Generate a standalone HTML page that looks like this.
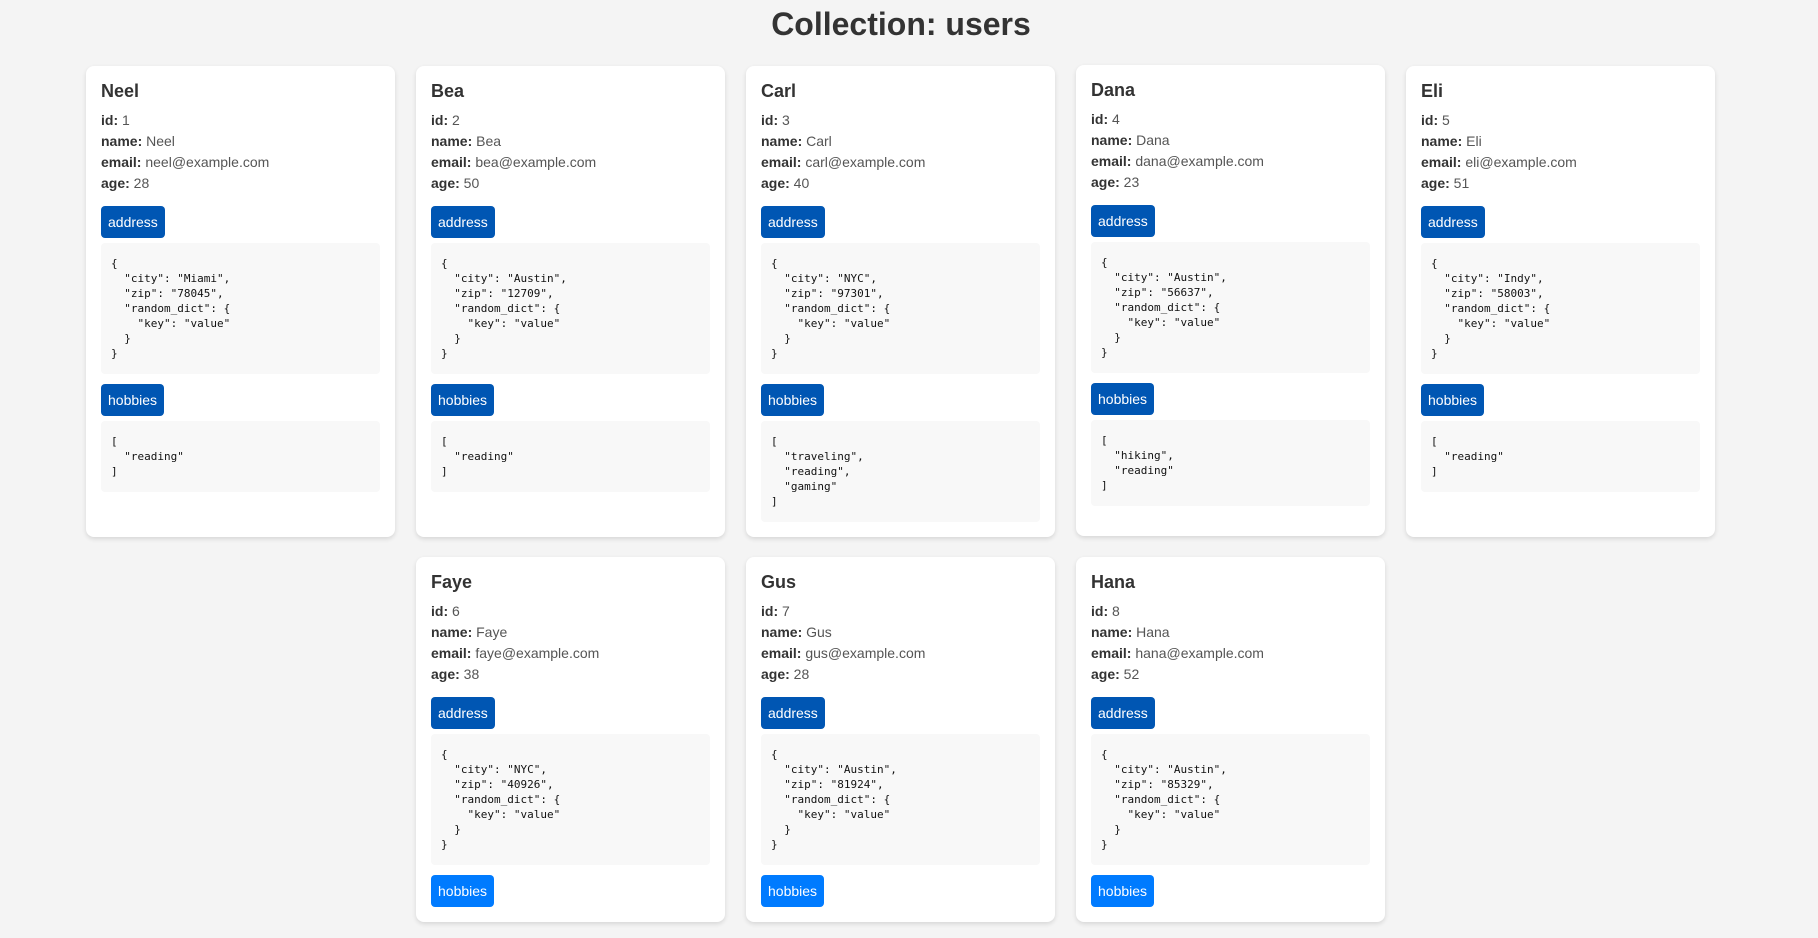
<!DOCTYPE html>
<html><head><meta charset="utf-8"><style>
body{margin:0;background:#f4f4f4;font-family:"Liberation Sans",Arial,sans-serif;width:1818px;height:938px;overflow:hidden}
h1{margin:0;padding-top:6px;height:60px;text-align:center;font-size:32px;line-height:37px;color:#333;width:1802px}
.wrap{display:flex;flex-wrap:wrap;justify-content:center;gap:20px 21px;width:1801px}
.card{background:#fff;border-radius:8px;box-shadow:0 2px 5px rgba(0,0,0,.12);width:279px;padding:15px 15px 15px;box-sizing:content-box}
.card h2{margin:0 0 8px;font-size:18px;line-height:21px;color:#333}
.card p{margin:0;font-size:14px;line-height:21px;color:#555}
.card p b{color:#333}
.btn{display:inline-block;margin-top:12px;height:32px;line-height:32px;padding:0 7px;border-radius:4px;color:#fff;background:#0056b3;font-size:14px}
.btn.l{background:#007bff}
pre{margin:5px 0 0;background:#f8f8f8;border-radius:4px;padding:13px 10px;font-family:"DejaVu Sans Mono",monospace;font-size:11px;line-height:15px;color:#111}
.btn+pre+.btn{margin-top:10px}
</style></head><body>
<h1>Collection: users</h1>
<div class="wrap">
<div class="card"><h2>Neel</h2><p><b>id:</b> 1</p><p><b>name:</b> Neel</p><p><b>email:</b> neel@example.com</p><p><b>age:</b> 28</p><span class="btn">address</span><pre>{
  "city": "Miami",
  "zip": "78045",
  "random_dict": {
    "key": "value"
  }
}</pre><span class="btn">hobbies</span><pre>[
  "reading"
]</pre></div>
<div class="card"><h2>Bea</h2><p><b>id:</b> 2</p><p><b>name:</b> Bea</p><p><b>email:</b> bea@example.com</p><p><b>age:</b> 50</p><span class="btn">address</span><pre>{
  "city": "Austin",
  "zip": "12709",
  "random_dict": {
    "key": "value"
  }
}</pre><span class="btn">hobbies</span><pre>[
  "reading"
]</pre></div>
<div class="card"><h2>Carl</h2><p><b>id:</b> 3</p><p><b>name:</b> Carl</p><p><b>email:</b> carl@example.com</p><p><b>age:</b> 40</p><span class="btn">address</span><pre>{
  "city": "NYC",
  "zip": "97301",
  "random_dict": {
    "key": "value"
  }
}</pre><span class="btn">hobbies</span><pre>[
  "traveling",
  "reading",
  "gaming"
]</pre></div>
<div class="card" style="transform:translateY(-1px)"><h2>Dana</h2><p><b>id:</b> 4</p><p><b>name:</b> Dana</p><p><b>email:</b> dana@example.com</p><p><b>age:</b> 23</p><span class="btn">address</span><pre>{
  "city": "Austin",
  "zip": "56637",
  "random_dict": {
    "key": "value"
  }
}</pre><span class="btn">hobbies</span><pre>[
  "hiking",
  "reading"
]</pre></div>
<div class="card"><h2>Eli</h2><p><b>id:</b> 5</p><p><b>name:</b> Eli</p><p><b>email:</b> eli@example.com</p><p><b>age:</b> 51</p><span class="btn">address</span><pre>{
  "city": "Indy",
  "zip": "58003",
  "random_dict": {
    "key": "value"
  }
}</pre><span class="btn">hobbies</span><pre>[
  "reading"
]</pre></div>
<div class="card"><h2>Faye</h2><p><b>id:</b> 6</p><p><b>name:</b> Faye</p><p><b>email:</b> faye@example.com</p><p><b>age:</b> 38</p><span class="btn">address</span><pre>{
  "city": "NYC",
  "zip": "40926",
  "random_dict": {
    "key": "value"
  }
}</pre><span class="btn l">hobbies</span></div>
<div class="card"><h2>Gus</h2><p><b>id:</b> 7</p><p><b>name:</b> Gus</p><p><b>email:</b> gus@example.com</p><p><b>age:</b> 28</p><span class="btn">address</span><pre>{
  "city": "Austin",
  "zip": "81924",
  "random_dict": {
    "key": "value"
  }
}</pre><span class="btn l">hobbies</span></div>
<div class="card"><h2>Hana</h2><p><b>id:</b> 8</p><p><b>name:</b> Hana</p><p><b>email:</b> hana@example.com</p><p><b>age:</b> 52</p><span class="btn">address</span><pre>{
  "city": "Austin",
  "zip": "85329",
  "random_dict": {
    "key": "value"
  }
}</pre><span class="btn l">hobbies</span></div>
</div>
</body></html>
